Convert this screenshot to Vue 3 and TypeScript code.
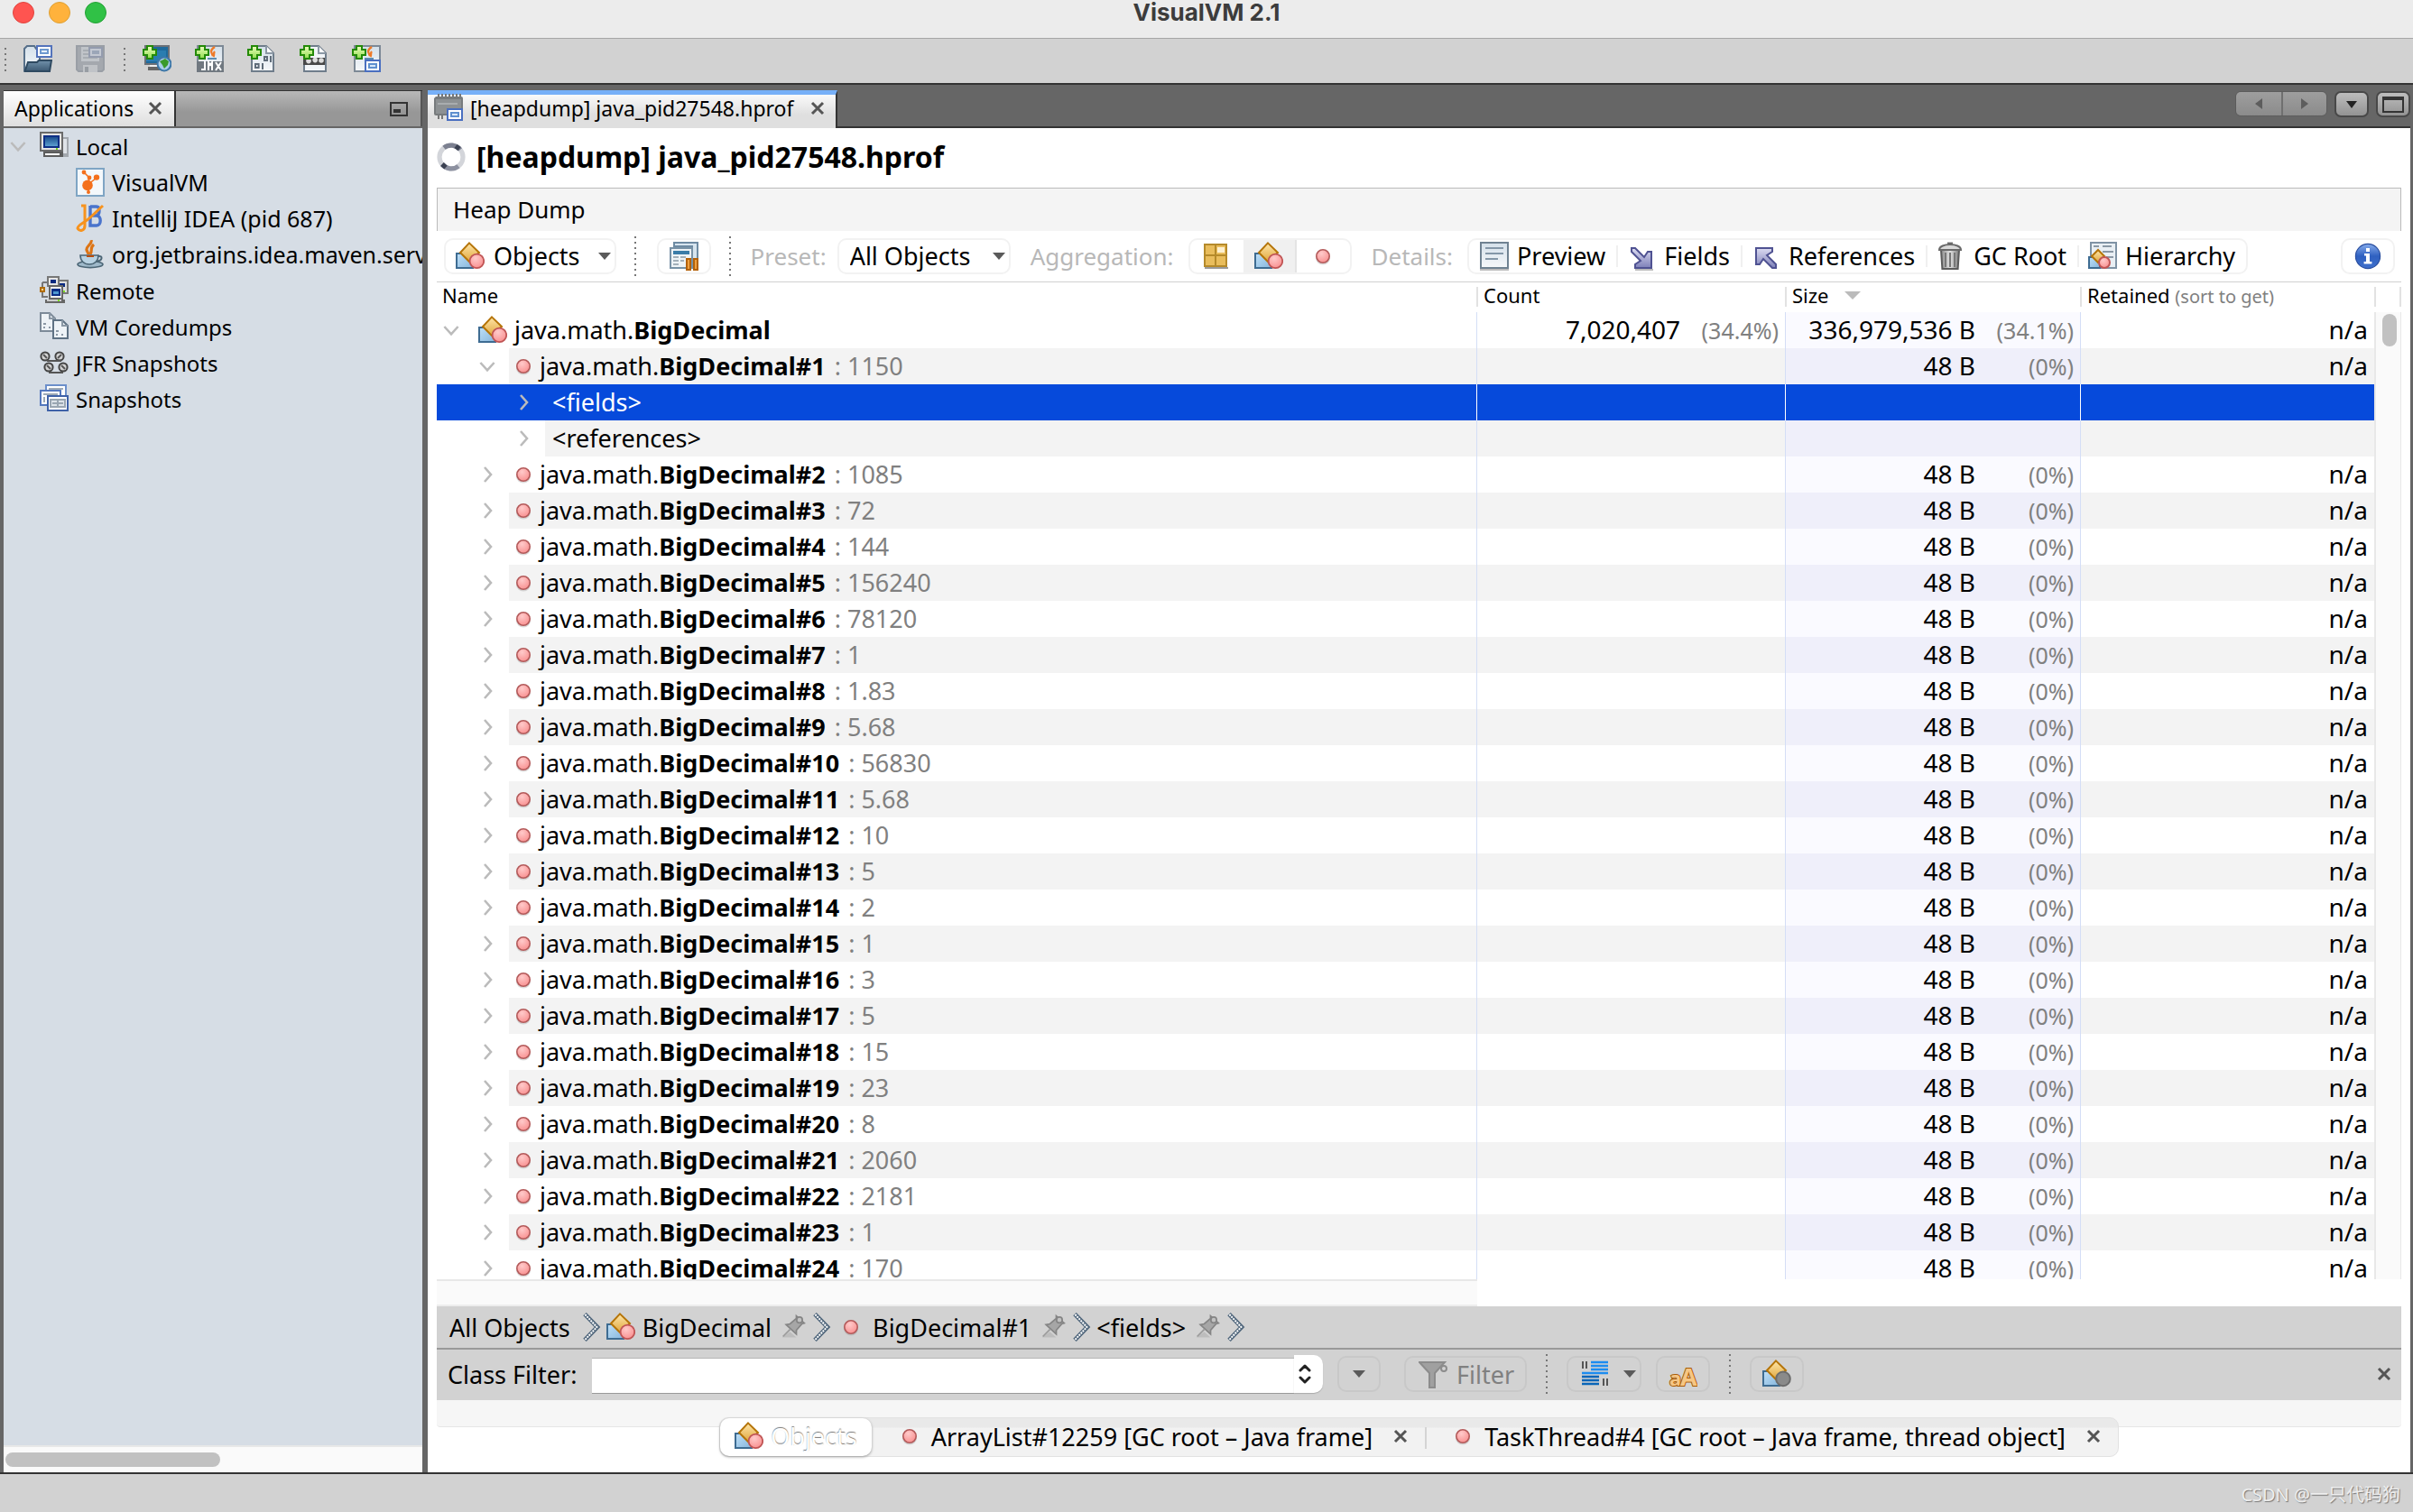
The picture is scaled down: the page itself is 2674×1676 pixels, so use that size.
<script setup lang="ts">
import { ref } from 'vue'

interface Row {
  level: number
  open: boolean
  icon?: string
  plain?: string
  bold?: string
  detail?: string
  count?: string
  countPct?: string
  size?: string
  sizePct?: string
  retained?: string
  selected?: boolean
}

const details = [
  '1085', '72', '144', '156240', '78120', '1', '1.83', '5.68', '56830', '5.68', '10', '5',
  '2', '1', '3', '5', '15', '23', '8', '2060', '2181', '1', '170',
]

const instance = (n: number, detail: string, open = false): Row => ({
  level: 1,
  open,
  icon: 'dot',
  plain: 'java.math.',
  bold: `BigDecimal#${n}`,
  detail,
  size: '48 B',
  sizePct: '(0%)',
  retained: 'n/a',
})

const rows: Row[] = [
  {
    level: 0, open: true, icon: 'classes', plain: 'java.math.', bold: 'BigDecimal',
    count: '7,020,407', countPct: '(34.4%)', size: '336,979,536 B', sizePct: '(34.1%)', retained: 'n/a',
  },
  instance(1, '1150', true),
  { level: 2, open: false, plain: '<fields>', selected: true },
  { level: 2, open: false, plain: '<references>' },
  ...details.map((d, i) => instance(i + 2, d)),
]

const toolbarIcons = [
  { id: 'add-remote', label: 'Add Remote Host' },
  { id: 'add-jmx', label: 'Add JMX Connection' },
  { id: 'add-core', label: 'Add VM Coredump' },
  { id: 'add-jfr', label: 'Add JFR Snapshot' },
  { id: 'add-snap', label: 'Load Snapshot' },
]

const tree = [
  { id: 'local', label: 'Local', open: true, child: false },
  { id: 'visualvm', label: 'VisualVM', open: false, child: true },
  { id: 'idea', label: 'IntelliJ IDEA (pid 687)', open: false, child: true },
  { id: 'java', label: 'org.jetbrains.idea.maven.serv', open: false, child: true },
  { id: 'remote', label: 'Remote', open: false, child: false },
  { id: 'coredumps', label: 'VM Coredumps', open: false, child: false },
  { id: 'jfr', label: 'JFR Snapshots', open: false, child: false },
  { id: 'snapshots', label: 'Snapshots', open: false, child: false },
]

const detailButtons = [
  { id: 'preview', label: 'Preview' },
  { id: 'fields', label: 'Fields' },
  { id: 'references', label: 'References' },
  { id: 'trash', label: 'GC Root' },
  { id: 'hierarchy', label: 'Hierarchy' },
]

const crumbs = [
  { icon: '', label: 'All Objects', pin: false },
  { icon: 'classes', label: 'BigDecimal', pin: true },
  { icon: 'dot', label: 'BigDecimal#1', pin: true },
  { icon: '', label: '<fields>', pin: true },
]

const preset = ref('All Objects')
const classFilter = ref('')
</script>

<template>
  <div class="window">
    <svg class="defs" width="0" height="0" aria-hidden="true">
      <defs>
        <linearGradient id="gGold" x1="0" y1="0" x2="0" y2="1"><stop offset="0" stop-color="#ffe6a8" /><stop offset="1" stop-color="#e0a840" /></linearGradient>
        <linearGradient id="gBlue" x1="0" y1="0" x2="1" y2="1"><stop offset="0" stop-color="#bfe0f8" /><stop offset="1" stop-color="#86b6dc" /></linearGradient>
        <radialGradient id="gPink" cx="0.4" cy="0.3" r="0.8"><stop offset="0" stop-color="#ffcaca" /><stop offset="1" stop-color="#f88a8a" /></radialGradient>
        <linearGradient id="gSheet" x1="0" y1="0" x2="0" y2="1"><stop offset="0" stop-color="#d4e0ea" /><stop offset="1" stop-color="#f6f8fa" /></linearGradient>
        <linearGradient id="gSteel" x1="0" y1="0" x2="0" y2="1"><stop offset="0" stop-color="#7191ab" /><stop offset="1" stop-color="#3c5972" /></linearGradient>
        <linearGradient id="gScreen" x1="0" y1="0" x2="0" y2="1"><stop offset="0" stop-color="#1c4f8e" /><stop offset="1" stop-color="#5c9fd0" /></linearGradient>
        <linearGradient id="gArrow" x1="0" y1="0" x2="0" y2="1"><stop offset="0" stop-color="#dcdcf2" /><stop offset="1" stop-color="#7d80b8" /></linearGradient>
        <linearGradient id="gMetal" x1="0" y1="0" x2="1" y2="0"><stop offset="0" stop-color="#8a8a8a" /><stop offset="0.5" stop-color="#e2e2e2" /><stop offset="1" stop-color="#7c7c7c" /></linearGradient>
        <linearGradient id="gInfo" x1="0" y1="0" x2="0" y2="1"><stop offset="0" stop-color="#86acec" /><stop offset="0.5" stop-color="#2f60c0" /><stop offset="1" stop-color="#3f70cc" /></linearGradient>
        <linearGradient id="gPlus" x1="0" y1="0" x2="0" y2="1"><stop offset="0" stop-color="#efffc0" /><stop offset="1" stop-color="#8fdc4e" /></linearGradient>
      </defs>

      <symbol id="plus" viewBox="0 0 16 16">
        <path d="M2.500 .5h3v2h2v3h-2v2h-3v-2h-2v-3h2z" fill="url(#gPlus)" stroke="#248a08" />
      </symbol>
      <symbol id="window-badge" viewBox="0 0 16 16">
        <rect x="7.500" y="8.500" width="8" height="6" fill="#fff" stroke="#4a6fc0" />
        <rect x="9.500" y="10.500" width="4" height="2" fill="#d8e8fa" stroke="#5f90cf" />
      </symbol>

      <symbol id="open" viewBox="0 0 16 16">
        <path d="M.5 14V2L2 .5h4l1 1.500h2V13z" fill="url(#gSheet)" stroke="#57708a" />
        <rect x="7.500" y=".5" width="8" height="6" fill="#fff" stroke="#5474bc" />
        <rect x="9.500" y="2.500" width="4" height="2" fill="#e4eefa" stroke="#6d98cf" />
        <path d="M2.500 9.500h5l1-1h7L14.500 14.500H.8z" fill="url(#gSteel)" stroke="#2f4a61" />
      </symbol>
      <symbol id="save" viewBox="0 0 16 16">
        <path d="M.5.5h15v13l-1 1h-13l-1-1z" fill="#a4a8ae" stroke="#9a9fa6" />
        <path d="M3 1h10v8H3z" fill="#c0c4c9" />
        <path d="M4 3h3M4 5h3M4 7h8" stroke="#a8adb3" />
        <rect x="7.500" y="1.500" width="7" height="5" fill="#c3c8d2" stroke="#949cae" />
        <rect x="9.500" y="3.500" width="3" height="1" fill="none" stroke="#9ba6b8" />
        <path d="M4 11h8v4H4z" fill="#c0c3c7" /><path d="M5 12h2v3H5z" fill="#989da3" />
      </symbol>
      <symbol id="add-remote" viewBox="0 0 16 16">
        <rect x="1.500" y=".5" width="13" height="10" fill="#1e6a9c" stroke="#6b7077" />
        <path d="M2 3h11v6H2z" fill="#2a7db0" />
        <path d="M3 12h8v2H3z" fill="#666" /><path d="M4 11h7v1H4z" fill="#eee" />
        <circle cx="12" cy="10.500" r="3.700" fill="#a9cdea" stroke="#3d77a8" />
        <path d="M9.500 9l3-1.500 2 1.500-.5 2-2 2-1-2z" fill="#3a9a2c" />
        <use href="#plus" />
      </symbol>
      <symbol id="add-jmx" viewBox="0 0 16 16">
        <rect x="1.500" y=".5" width="14" height="14" fill="url(#gSheet)" stroke="#7d8996" />
        <path d="M11 1c-3 2-2 3-1 5M11 3.500c-1 1 0 2-.8 3" fill="none" stroke="#ee7a28" stroke-width="1.200" />
        <path d="M7 7.500h5" stroke="#5d8db2" />
        <path d="M1 9h15v6H1z" fill="#707880" />
        <path d="M5.500 9v4.500h-2M7.500 14V9.500l1 1.500 1-1.500V14M11.500 9.500l3 4.500M14.500 9.500l-3 4.500" fill="none" stroke="#fff" />
        <use href="#plus" />
      </symbol>
      <symbol id="add-core" viewBox="0 0 16 16">
        <path d="M2.500.5h8l4 4v10h-12z" fill="url(#gSheet)" stroke="#6f7d8b" />
        <path d="M10.500.5v4h4" fill="#fff" stroke="#8b98a5" />
        <rect x="9.500" y="6.500" width="1.500" height="2" fill="none" stroke="#5f6c79" />
        <path d="M13 6v3.500M8.500 10v3.500" stroke="#5f6c79" />
        <rect x="4.500" y="10.500" width="1.800" height="2" fill="none" stroke="#5f6c79" />
        <use href="#plus" />
      </symbol>
      <symbol id="add-jfr" viewBox="0 0 16 16">
        <path d="M2.500.5h8l4 4v10h-12z" fill="#f2f5f8" stroke="#6f7d8b" />
        <path d="M10.500.5v4h4" fill="#fff" stroke="#8b98a5" />
        <path d="M2 7h12v4H2z" fill="#484848" />
        <circle cx="5" cy="8.800" r="1.400" fill="#ddd" /><circle cx="8.600" cy="8.300" r="1.400" fill="#ddd" /><circle cx="12" cy="8.500" r="1.400" fill="#ddd" />
        <use href="#plus" />
      </symbol>
      <symbol id="add-snap" viewBox="0 0 16 16">
        <rect x="1.500" y=".5" width="14" height="14" fill="url(#gSheet)" stroke="#7d8996" />
        <path d="M11 1c-3 2-2 3-1 5M11 3.500c-1 1 0 2-.8 3" fill="none" stroke="#ee7a28" stroke-width="1.200" />
        <path d="M7 7.500h5" stroke="#5d8db2" />
        <use href="#window-badge" />
        <use href="#plus" />
      </symbol>

      <symbol id="local" viewBox="0 0 16 16">
        <path d="M12 3h4v11h-4z" fill="#a3a8ae" /><path d="M13 4h2v8h-2z" fill="#dfe3e8" />
        <path d="M2 11h11v3H2z" fill="#5c5c5c" /><path d="M3 12h8v1H3z" fill="#fff" />
        <rect x=".5" y=".5" width="12" height="10" fill="#e4e4e4" stroke="#6a6a6a" />
        <path d="M2 2h9v7H2z" fill="#0e2f86" /><path d="M3 3h7v5H3z" fill="url(#gScreen)" />
        <path d="M9 9h1v1H9z" fill="#76d321" />
      </symbol>
      <symbol id="visualvm" viewBox="0 0 16 16">
        <rect x=".5" y=".5" width="15" height="15" fill="#f4f8fb" stroke="#7fa5c4" />
        <circle cx="6.500" cy="9.700" r="2.900" fill="#f4701c" /><circle cx="11.500" cy="5.300" r="1.600" fill="#f4701c" />
        <circle cx="4.500" cy="2.500" r="1.200" fill="#f4701c" /><circle cx="7.500" cy="5.500" r="1.200" fill="#f4701c" /><circle cx="7" cy="13.500" r="1" fill="#f4701c" />
        <path d="M4.500 2.500l3 3-1 4 5-4M6.500 9l.5 4" stroke="#f4701c" stroke-width=".8" fill="none" />
      </symbol>
      <symbol id="idea" viewBox="0 0 16 16">
        <path d="M8 1.500h3.500c2 0 2 4.500 0 5H8M8 6.500h3.500c2.800 0 2.800 5.500 0 5.500H8zM8 1v11" fill="none" stroke="#4a74cc" stroke-width="1.700" />
        <path d="M3 1h2v11c0 3-3 3.500-4 1.500 0-2 4-3 7-6l7-6.500" fill="none" stroke="#f7931e" stroke-width="1.500" />
      </symbol>
      <symbol id="java" viewBox="0 0 16 16">
        <path d="M8.500 0c1 2-3 3.500-2.500 5.500.3 1.200 1 1.500.8 2.500M10 2.500C7.500 4.500 9.500 5.500 8 8" fill="none" stroke="#dd7414" stroke-width="1.600" />
        <ellipse cx="8" cy="13.500" rx="7" ry="1.800" fill="#9fb9ca" stroke="#4c6676" stroke-width=".8" />
        <path d="M2.500 8.500h10c0 3-2 5-5 5s-5-2-5-5z" fill="#b9d2e2" stroke="#4c6676" stroke-width=".8" />
        <path d="M12.500 9c2.500-.5 2.500 2.500-.8 2.700" fill="none" stroke="#4c6676" />
        <path d="M6 9h4" stroke="#b84b0a" />
      </symbol>
      <symbol id="remote" viewBox="0 0 16 16">
        <path d="M1.500 3.500h4M1.500 3.500v8h3" fill="none" stroke="#777" />
        <rect x="10.500" y="2.500" width="5" height="7" fill="#ddd" stroke="#777" /><path d="M11 4h3v2h-3z" fill="#0a2a80" />
        <rect x="4.500" y=".5" width="6" height="5" fill="#e6e6e6" stroke="#777" /><path d="M6 2h3v2H6z" fill="#0a2a80" />
        <rect x="5.500" y="5.500" width="7" height="7" fill="#f0f0f0" stroke="#666" /><path d="M6.500 7h5v4h-5z" fill="#0a2f86" /><path d="M7.500 8.500h3v1.500h-3z" fill="#4d97d0" />
        <path d="M3 13h11v2H3z" fill="#666" /><path d="M4 13h8v1H4z" fill="#ccc" />
        <path d="M10 13h1v1h-1zM13 8h1v1h-1z" fill="#7be01e" />
        <rect x=".5" y="6.500" width="2" height="2" fill="#ffd890" stroke="#b06c0c" />
      </symbol>
      <symbol id="coredumps" viewBox="0 0 16 16">
        <path d="M.5.5h5l3 3v7h-8z" fill="#eef3f7" stroke="#7c8a98" /><path d="M5.500.5v3h3M2 6.500h1.500M2 8.500h1M5 8.500h1" fill="none" stroke="#8b98a5" />
        <path d="M7.500 4.500h5l3 3v7h-8z" fill="#eef3f7" stroke="#5f7284" /><path d="M12.500 4.500v3h3M9 10.500h1.500M9 12.500h1M12 12.500h1" fill="none" stroke="#8b98a5" />
      </symbol>
      <symbol id="jfr" viewBox="0 0 16 16">
        <g fill="#d3d3d3" stroke="#444"><circle cx="3" cy="4.500" r="2.300" /><circle cx="11" cy="4.500" r="2.300" /><circle cx="5" cy="10.500" r="2.300" /><circle cx="13" cy="10.500" r="2.300" /></g>
        <path d="M4 7h8M5 13.500h8M2 3.500l2 2M10 5.500l2-2M4 9.500l2 2M12 9.500l2 2" stroke="#555" />
      </symbol>
      <symbol id="snapshots" viewBox="0 0 16 16">
        <rect x="3.500" y=".5" width="11" height="6" fill="#fff" stroke="#6c8fca" /><path d="M5 2.500h8" stroke="#9eaab6" />
        <rect x=".5" y="3.500" width="11" height="8" fill="#fff" stroke="#5478be" /><path d="M2 5.500h8M2.500 7v3" stroke="#9eaab6" />
        <rect x="4.500" y="6.500" width="11" height="8" fill="#fff" stroke="#3f62a8" />
        <path d="M6 8.500h8v4H6zM7 10.500h6M10 8.500v4" fill="#dde3e9" stroke="#9aa6b2" />
      </symbol>

      <symbol id="heap" viewBox="0 0 16 16">
        <path d="M2 0h1v2H2zM4 0h1v2H4zM6 0h1v2H6zM8 0h1v2H8zM10 0h1v2h-1zM12 0h1v2h-1zM14 0h1v2h-1zM2 12h1v2H2zM4 12h1v2H4z" fill="#777" />
        <path d="M1 1.500h14a1 1 0 0 1 1 1V12H1a1 1 0 0 1-1-1V2.500z" fill="#777b7d" /><path d="M1 3h14v8H1z" fill="#8d9193" /><path d="M2 5h11v1H2z" fill="#a9adaf" />
        <use href="#window-badge" />
      </symbol>
      <symbol id="classes" viewBox="0 0 16 16">
        <path d="M.5 6.500h9v8h-9z" fill="url(#gBlue)" stroke="#3e6c92" />
        <path d="M7.500.7L13 6 7.500 11 2.500 6z" fill="url(#gGold)" stroke="#b57408" />
        <circle cx="11.700" cy="10.700" r="3.900" fill="url(#gPink)" stroke="#c05555" stroke-width=".9" />
      </symbol>
      <symbol id="classes-gray" viewBox="0 0 16 16">
        <path d="M.5 6.500h9v8h-9z" fill="url(#gBlue)" stroke="#3e6c92" />
        <path d="M7.500.7L13 6 7.500 11 2.500 6z" fill="url(#gGold)" stroke="#b57408" />
        <circle cx="11.500" cy="10.700" r="3.900" fill="#8a8a8a" stroke="#6c6c6c" />
      </symbol>
      <symbol id="dot" viewBox="0 0 16 16">
        <ellipse cx="8" cy="9" rx="4" ry="3.800" fill="#999" opacity=".35" />
        <circle cx="8" cy="8" r="3.600" fill="url(#gPink)" stroke="#b35a5a" stroke-width=".8" />
      </symbol>
      <symbol id="package" viewBox="0 0 16 16">
        <path d="M1 1h13v13H1z" fill="#e9bd5c" /><path d="M1.500 1.500h12v12h-12zM7.500 1v13M1 7.500h13" fill="none" stroke="#b58a2a" />
        <path d="M1.500 14.500h13" stroke="#9a9a9a" /><path d="M8.500 3h4v3h-4z" fill="#fdf0d0" />
      </symbol>
      <symbol id="auto" viewBox="0 0 16 16">
        <path d="M2.500.5h13v10h-3v-8h-10z" fill="#d7e5ef" stroke="#6e8ba3" />
        <path d="M.5 3.500h12v11H.5z" fill="#eef3f6" stroke="#7892a6" /><path d="M2 5h9v2H2z" fill="#3a7ca8" />
        <path d="M2 8.500h3M6 8.500h3M2 10.500h3M6 10.500h2M2 12.500h3" stroke="#a3b0ba" />
        <path d="M9.500 9.500h2v6h-2zM13.500 9.500h2v6h-2z" fill="#f0a040" stroke="#b4620a" />
      </symbol>
      <symbol id="preview" viewBox="0 0 16 16">
        <path d="M0 15h16v1H0z" fill="#bbb" /><path d="M.5.5h15v14H.5z" fill="url(#gSheet)" stroke="#6f8292" />
        <path d="M3 3.500h10M3 6.500h10M3 9.500h7" stroke="#8497a8" />
      </symbol>
      <symbol id="fields" viewBox="0 0 16 16">
        <path d="M4.500 15.500h10" stroke="#bbb" />
        <path d="M4.500 3.500h-2v2l5 5-3 2v2h9v-9h-2l-2 3z" fill="url(#gArrow)" stroke="#4f5292" />
      </symbol>
      <symbol id="references" viewBox="0 0 16 16">
        <path d="M11.500 14.500h2v-2l-5-5 3-2v-2h-9v9h2l2-3z" fill="url(#gArrow)" stroke="#4f5292" />
      </symbol>
      <symbol id="trash" viewBox="0 0 16 16">
        <path d="M2.500 4.500h10l-.7 10.500H3.200z" fill="url(#gMetal)" stroke="#5c5c5c" /><path d="M5 6v8M7.500 6v8M10 6v8" stroke="#777" />
        <path d="M1.500 4.500c0-4 12-4 12 0z" fill="#d9d9d9" stroke="#6a6a6a" /><path d="M6 .8h3" stroke="#666" />
      </symbol>
      <symbol id="hierarchy" viewBox="0 0 16 16">
        <path d="M1.500.5h14v14h-14z" fill="#e9eff4" stroke="#7f93a5" /><path d="M3 2.500h3M8 2.500h5M8 5.500h6M10 8.500h4" stroke="#8a98a5" />
        <path d="M.5 8.500h6v6h-6z" fill="url(#gBlue)" stroke="#3e6c92" /><path d="M5.500 4.500L9 8l-3.500 3.500L2 8z" fill="url(#gGold)" stroke="#b57408" />
        <circle cx="9" cy="11.500" r="3" fill="url(#gPink)" stroke="#c05555" />
      </symbol>
      <symbol id="info" viewBox="0 0 16 16">
        <circle cx="8" cy="8" r="6.800" fill="url(#gInfo)" stroke="#2a4fa0" stroke-width=".6" />
        <path d="M7 3.500h2v2H7zM6 6.500h3v4.500h1.200v1.200H5.800V11H7V7.700H6z" fill="#fff" />
      </symbol>
      <symbol id="funnel" viewBox="0 0 16 16">
        <path d="M.5 1.500h14L9 7.500v8H6v-8z" fill="#a0a0a0" stroke="#8c8c8c" /><circle cx="14" cy="5" r="1.500" fill="none" stroke="#8c8c8c" />
      </symbol>
      <symbol id="lines" viewBox="0 0 16 16">
        <path d="M6 1.500h9.500M6 3.500h9.500M6 5.500h9.500M1 7.500h14.500" stroke="#1c8cf0" stroke-width="1.200" /><path d="M1 9.500h9.500M1 11.500h9.500M1 13.500h9.500" stroke="#0a66b8" stroke-width="1.200" />
        <path d="M1.500 1v4M3.500 1v4M13 10.500v4M15 10.500v4" stroke="#555" />
      </symbol>
      <symbol id="pin" viewBox="0 0 16 16">
        <path d="M1 14.500h9L6 11z" fill="#bdbdbd" /><path d="M1.500 14L6 9.500" stroke="#9a9a9a" />
        <path d="M3.500 6.500l2.500-.5 4-3.500V1l5 4.500-1.500.5L10 10v2.500z" fill="#a6a6a6" stroke="#858585" />
        <circle cx="12" cy="3.500" r="1.800" fill="#c2c2c2" stroke="#858585" />
      </symbol>
      <symbol id="crumb-sep" viewBox="0 0 10 16">
        <path d="M1 .8l7 7.200-7 7.200" fill="none" stroke="#51677c" stroke-width="2.400" />
        <path d="M1.200 1l6.500 7-6.500 7" fill="none" stroke="#fff" stroke-width="1" stroke-dasharray="1 .5" />
      </symbol>
      <symbol id="chev-right" viewBox="0 0 16 16"><path d="M6.500 4l3.500 4-3.500 4" fill="none" stroke="#bbb" stroke-width="1.300" /></symbol>
      <symbol id="chev-down" viewBox="0 0 16 16"><path d="M4.200 6l3.800 4.200L11.800 6" fill="none" stroke="#bbb" stroke-width="1.300" /></symbol>
      <symbol id="close" viewBox="0 0 16 16"><path d="M2 2l12 12M14 2L2 14" fill="none" stroke="#555" stroke-width="3" /></symbol>
      <symbol id="tri" viewBox="0 0 14 8"><path d="M0 0h14L7 8z" fill="#5a5a5a" /></symbol>
    </svg>

    <header class="titlebar">
      <div class="lights"><span class="light red"></span><span class="light amber"></span><span class="light green"></span></div>
      <h1 class="title">VisualVM 2.1</h1>
      <div class="lights"></div>
    </header>

    <div class="main-toolbar">
      <span class="dots short"></span>
      <button class="tool" aria-label="Open"><svg class="icon"><use href="#open" /></svg></button>
      <button class="tool" aria-label="Save" disabled><svg class="icon"><use href="#save" /></svg></button>
      <span class="dots short second"></span>
      <button v-for="t in toolbarIcons" :key="t.id" class="tool" :aria-label="t.label">
        <svg class="icon"><use :href="`#${t.id}`" /></svg>
      </button>
    </div>

    <div class="workspace">
      <aside class="side">
        <div class="side-tabs">
          <div class="side-tab">
            Applications
            <button class="close" aria-label="Close Applications"><svg class="x"><use href="#close" /></svg></button>
          </div>
          <div class="side-rest">
            <button class="close" aria-label="Minimize"><span class="mini"></span></button>
          </div>
        </div>
        <ul class="tree">
          <li v-for="n in tree" :key="n.id" class="node" :class="{ child: n.child }">
            <span class="twist"><svg v-if="n.open" class="icon"><use href="#chev-down" /></svg></span>
            <svg class="icon"><use :href="`#${n.id}`" /></svg>
            <span class="node-label">{{ n.label }}</span>
          </li>
        </ul>
        <div class="hscroll"><span class="hthumb"></span></div>
      </aside>

      <main class="editor">
        <div class="doc-tabs">
          <div class="doc-tab">
            <svg class="icon"><use href="#heap" /></svg>
            <span>[heapdump] java_pid27548.hprof</span>
            <button class="close" aria-label="Close document"><svg class="x"><use href="#close" /></svg></button>
          </div>
          <div class="doc-fill">
            <div class="nav-pair">
              <button class="nav" aria-label="Previous" disabled><span class="arrow left"></span></button>
              <button class="nav" aria-label="Next" disabled><span class="arrow right"></span></button>
            </div>
            <button class="nav solo" aria-label="Show documents"><span class="arrow down"></span></button>
            <button class="nav solo" aria-label="Maximize"><span class="max"></span></button>
          </div>
        </div>

        <div class="doc">
          <div class="heading">
            <svg class="icon" viewBox="0 0 16 16">
              <circle cx="8" cy="8" r="6.500" fill="none" stroke="#d3d5da" stroke-width="2.600" />
              <path d="M4 2.900a6.500 6.500 0 0 1 9 1" fill="none" stroke="#7c8090" stroke-width="2.600" />
              <path d="M10.500 2l2 1.500" fill="none" stroke="#3b4152" stroke-width="2.600" />
              <path d="M12 13.100a6.500 6.500 0 0 1-9-1" fill="none" stroke="#8d91a0" stroke-width="2.600" />
              <path d="M5 13.800l-2-1.800" fill="none" stroke="#3b4152" stroke-width="2.600" />
            </svg>
            <h2>[heapdump] java_pid27548.hprof</h2>
          </div>
          <div class="section">Heap Dump</div>

          <div class="view-bar">
            <button class="pill objects"><svg class="icon"><use href="#classes" /></svg>Objects<svg class="tri"><use href="#tri" /></svg></button>
            <span class="dots"></span>
            <button class="pill only" aria-label="Auto refresh"><svg class="icon"><use href="#auto" /></svg></button>
            <span class="dots"></span>
            <label class="faint" for="preset">Preset:</label>
            <span class="pill pick">
              <select id="preset" v-model="preset"><option>All Objects</option></select>
              <svg class="tri"><use href="#tri" /></svg>
            </span>
            <span class="faint">Aggregation:</span>
            <div class="group">
              <button class="seg" aria-label="Packages"><svg class="icon"><use href="#package" /></svg></button>
              <button class="seg on" aria-label="Classes"><svg class="icon"><use href="#classes" /></svg></button>
              <button class="seg" aria-label="Instances"><svg class="icon"><use href="#dot" /></svg></button>
            </div>
            <span class="faint">Details:</span>
            <div class="group">
              <button v-for="d in detailButtons" :key="d.id" class="seg text"><svg class="icon"><use :href="`#${d.id}`" /></svg>{{ d.label }}</button>
            </div>
            <button class="pill only info" aria-label="Information"><svg class="icon"><use href="#info" /></svg></button>
          </div>

          <div class="grid">
            <div class="grid-clip">
              <table>
                <colgroup><col /><col class="c-count" /><col class="c-size" /><col class="c-ret" /></colgroup>
                <thead>
                  <tr>
                    <th scope="col">Name</th>
                    <th scope="col">Count</th>
                    <th scope="col">Size <span class="sort"></span></th>
                    <th scope="col">Retained <small>(sort to get)</small></th>
                  </tr>
                </thead>
                <tbody>
                  <tr v-for="(r, i) in rows" :key="i" :class="{ alt: i % 2 === 1, selected: r.selected }">
                    <td class="name">
                      <div class="cell" :class="`l${r.level}`">
                        <span class="indent"><svg class="icon"><use :href="r.open ? '#chev-down' : '#chev-right'" /></svg></span>
                        <span class="body">
                          <svg v-if="r.icon" class="icon" :class="{ small: r.icon === 'dot' }"><use :href="`#${r.icon}`" /></svg>
                          <span>{{ r.plain }}<b v-if="r.bold">{{ r.bold }}</b></span>
                          <span v-if="r.detail" class="muted">: {{ r.detail }}</span>
                        </span>
                      </div>
                    </td>
                    <td><div v-if="r.count" class="num">{{ r.count }}<span class="pct">{{ r.countPct }}</span></div></td>
                    <td class="size"><div v-if="r.size" class="num">{{ r.size }}<span class="pct">{{ r.sizePct }}</span></div></td>
                    <td><div class="num">{{ r.retained }}</div></td>
                  </tr>
                </tbody>
              </table>
            </div>
            <div class="vscroll"><span class="vhead"></span><div class="vtrack"><span class="vthumb"></span></div></div>
          </div>
          <div class="name-scroll"><span class="name-track"></span></div>

          <nav class="crumbs" aria-label="Path">
            <template v-for="c in crumbs" :key="c.label">
              <svg v-if="c.icon" class="icon"><use :href="`#${c.icon}`" /></svg>
              <a href="#">{{ c.label }}</a>
              <svg v-if="c.pin" class="icon pin"><use href="#pin" /></svg>
              <svg class="sep"><use href="#crumb-sep" /></svg>
            </template>
          </nav>

          <div class="filter-bar">
            <label for="filter">Class Filter:</label>
            <div class="combo">
              <input id="filter" v-model="classFilter" type="text" />
              <button class="stepper" aria-label="Show history">
                <svg width="14" height="22" viewBox="0 0 14 22"><path d="M2 7l5-5 5 5M2 15l5 5 5-5" fill="none" stroke="#222" stroke-width="3" stroke-linecap="round" stroke-linejoin="round" /></svg>
              </button>
            </div>
            <button class="pill gray slim" aria-label="Filter type"><svg class="tri"><use href="#tri" /></svg></button>
            <button class="pill gray filter" disabled><svg class="icon"><use href="#funnel" /></svg>Filter</button>
            <span class="dots"></span>
            <button class="pill gray mode" aria-label="Match mode"><svg class="icon"><use href="#lines" /></svg><svg class="tri"><use href="#tri" /></svg></button>
            <button class="pill gray only" aria-label="Match case">
              <svg class="icon letters" viewBox="0 0 32 32"><text x="1" y="29" font-size="22">a</text><text x="13" y="29" font-size="27">A</text></svg>
            </button>
            <span class="dots"></span>
            <button class="pill gray only" aria-label="Filter classes"><svg class="icon"><use href="#classes-gray" /></svg></button>
            <button class="close end" aria-label="Close filter"><svg class="x"><use href="#close" /></svg></button>
          </div>

          <div class="strip"></div>
          <div class="view-tabs">
            <div class="view-set">
              <button class="view current"><svg class="icon"><use href="#classes" /></svg>Objects</button>
              <div class="view"><svg class="icon"><use href="#dot" /></svg>ArrayList#12259 [GC root – Java frame]<button class="close" aria-label="Close ArrayList#12259"><svg class="x"><use href="#close" /></svg></button></div>
              <div class="view"><svg class="icon"><use href="#dot" /></svg>TaskThread#4 [GC root – Java frame, thread object]<button class="close" aria-label="Close TaskThread#4"><svg class="x"><use href="#close" /></svg></button></div>
            </div>
          </div>
        </div>
      </main>
    </div>

    <footer class="status">CSDN @一只代码狗</footer>
  </div>
</template>

<style>
body {
  margin: 0;
}
</style>

<style scoped>
.window {
  display: flex;
  flex-direction: column;
  height: 100vh;
  overflow: hidden;
  background: #d2d2d2;
  color: #000;
  font-family: "Noto Sans", "Open Sans", sans-serif;
  font-size: 27px;
  white-space: nowrap;
}
.window *,
.window *::before {
  box-sizing: border-box;
}
.defs {
  position: absolute;
}
button,
input,
select {
  margin: 0;
  padding: 0;
  border: 0;
  background: none;
  color: inherit;
  font: inherit;
}
.icon {
  flex: none;
  width: 32px;
  height: 32px;
}
.x {
  width: 16px;
  height: 16px;
}
.tri {
  flex: none;
  width: 14px;
  height: 8px;
}
.close {
  display: flex;
  align-items: center;
}

/* Title bar */
.titlebar {
  display: flex;
  flex: none;
  height: 43px;
  border-bottom: 1px solid #a6a6a6;
  background: #ececec;
}
.lights {
  display: flex;
  flex: 1;
  gap: 16px;
  padding: 2px 0 0 14px;
}
.light {
  width: 24px;
  height: 24px;
  border: 1px solid;
  border-radius: 50%;
}
.red {
  border-color: #e0443e;
  background: #ff5450;
}
.amber {
  border-color: #dea034;
  background: #ffb23c;
}
.green {
  border-color: #24a135;
  background: #30c146;
}
.title {
  margin: 0;
  color: #3c3c3c;
  font: 700 26px/28px Inter, sans-serif;
}

/* Main toolbar */
.main-toolbar {
  display: flex;
  flex: none;
  align-items: center;
  height: 51px;
  padding: 0 0 4px 5px;
  border-bottom: 2px solid #333;
}
.tool {
  display: flex;
  justify-content: center;
  width: 58px;
}
.dots {
  flex: none;
  width: 2px;
  height: 44px;
  background: repeating-linear-gradient(#777 0 2px, transparent 2px 6px);
}
.dots.short {
  height: 26px;
  margin-right: 6px;
}
.dots.second {
  margin-left: 8px;
}

/* Workspace */
.workspace {
  display: flex;
  flex: 1;
  min-height: 0;
  padding: 6px 3px 0 4px;
  gap: 6px;
  border-bottom: 2px solid #333;
  background: #666;
}
.side {
  display: flex;
  flex: none;
  flex-direction: column;
  width: 464px;
  background: #d6dde5;
}
.side-tabs {
  display: flex;
  flex: none;
  height: 42px;
  border-top: 1px solid #333;
  border-bottom: 2px solid #666;
  font-size: 23px;
}
.side-tab {
  display: flex;
  align-items: center;
  gap: 16px;
  padding: 0 13px 2px 12px;
  border-right: 2px solid #333;
  background: linear-gradient(#fff, #dedede);
}
.side-rest {
  display: flex;
  flex: 1;
  align-items: center;
  justify-content: flex-end;
  padding-right: 14px;
  border-right: 2px solid #555;
  background: linear-gradient(#b8b8b8, #979797 60%);
}
.mini {
  display: block;
  width: 20px;
  height: 16px;
  border: 2px solid #333;
  background: linear-gradient(#333, #333) 2px 6px / 8px 4px no-repeat;
}
.tree {
  flex: 1;
  margin: 0;
  padding: 0;
  overflow: hidden;
  list-style: none;
  font-size: 24px;
}
.node {
  display: flex;
  align-items: center;
  height: 40px;
  gap: 8px;
}
.node.child {
  font-size: 25px;
}
.twist {
  display: flex;
  flex: none;
  width: 32px;
}
.node.child .twist {
  width: 72px;
}
.hscroll {
  flex: none;
  height: 30px;
  padding: 6px 2px;
  border-top: 2px solid #e8e8e8;
  background: #fafafa;
}
.hthumb {
  display: block;
  width: 238px;
  height: 16px;
  border-radius: 8px;
  background: #c1c1c1;
}

/* Editor tabs */
.editor {
  display: flex;
  flex: 1;
  flex-direction: column;
  min-width: 0;
}
.doc-tabs {
  display: flex;
  flex: none;
  height: 42px;
}
.doc-tab {
  display: flex;
  align-items: center;
  gap: 8px;
  padding: 0 12px 7px 7px;
  border-top: 5px solid #77b0f8;
  border-right: 2px solid #333;
  background: linear-gradient(#fafafa, #dfdfdf 60%);
  font-size: 23px;
}
.doc-tab .close {
  margin-left: 11px;
}
.doc-fill {
  display: flex;
  flex: 1;
  justify-content: flex-end;
  gap: 8px;
  padding: 1px 0 0;
  border-bottom: 2px solid #333;
}
.nav-pair {
  display: flex;
  height: 28px;
  border: 1px solid #5c5c5c;
  border-radius: 6px;
  overflow: hidden;
}
.nav {
  display: flex;
  align-items: center;
  justify-content: center;
  width: 50px;
  background: linear-gradient(#9e9e9e, #8b8b8b);
}
.nav + .nav {
  border-left: 2px solid #6f6f6f;
}
.nav.solo {
  width: 38px;
  height: 29px;
  border: 2px solid #484848;
  border-radius: 7px;
  background: linear-gradient(#bdbdbd, #939393);
}
.arrow {
  border: 6px solid transparent;
}
.arrow.left {
  border-width: 6px 8px 6px 0;
  border-right-color: #5d5d5d;
}
.arrow.right {
  border-width: 6px 0 6px 8px;
  border-left-color: #5d5d5d;
}
.arrow.down {
  border-width: 8px 6px 0;
  border-top-color: #222;
}
.max {
  width: 24px;
  height: 18px;
  border: 2px solid #333;
  border-top-width: 4px;
}

/* Document */
.doc {
  display: flex;
  flex: 1;
  flex-direction: column;
  min-height: 0;
  padding: 0 10px;
  background: #fff;
}
.heading {
  display: flex;
  flex: none;
  align-items: center;
  gap: 12px;
  height: 66px;
  padding-bottom: 2px;
}
h2 {
  margin: 0;
  font-size: 32px;
  font-weight: 700;
  line-height: 60px;
}
.section {
  flex: none;
  height: 48px;
  padding-left: 17px;
  border: 1px solid #bbb;
  border-bottom: 0;
  background: #f4f4f4;
  font-size: 26px;
  line-height: 46px;
}
.view-bar {
  display: flex;
  flex: none;
  align-items: center;
  height: 57px;
  padding: 0 7px 1px 8px;
  border-bottom: 1px solid #d0d0d0;
}
.pill,
.group {
  display: flex;
  flex: none;
  align-items: center;
  height: 40px;
  border: 2px solid #f2f2f2;
  border-radius: 10px;
}
.objects {
  gap: 10px;
  margin-right: 20px;
  padding: 0 4px 0 11px;
}
.objects .tri {
  margin-left: 10px;
}
.only {
  justify-content: center;
  width: 60px;
}
.view-bar .only {
  margin: 0 20px 0 23px;
}
.view-bar .info {
  margin: 0 0 0 auto;
}
.faint {
  margin: 0 12px 0 22px;
  color: #b8b8b8;
  font-size: 26px;
}
.faint + .group {
  margin-left: 4px;
}
.pick {
  padding: 0 4px 0 12px;
}
select {
  width: 158px;
  appearance: none;
}
.seg {
  display: flex;
  align-items: center;
  justify-content: center;
  width: 59px;
  height: 36px;
}
.seg.on {
  border-right: 2px solid #e4e4e4;
  background: #f0f0f0;
}
.seg.text {
  position: relative;
  gap: 9px;
  width: auto;
  padding: 0 12px;
}
.seg.text + .seg.text::before {
  position: absolute;
  left: 0;
  width: 2px;
  height: 24px;
  background: #f0f0f0;
  content: "";
}

/* Object table */
.grid {
  display: flex;
  flex: 1;
  min-height: 0;
}
.grid-clip {
  flex: 1;
  min-width: 0;
  overflow: hidden;
}
table {
  width: 100%;
  border-spacing: 0;
  table-layout: fixed;
}
.c-count {
  width: 342px;
}
.c-size {
  width: 327px;
}
.c-ret {
  width: 326px;
}
th {
  height: 33px;
  padding: 0 0 5px 8px;
  background: linear-gradient(#e2e2e2, #e2e2e2) 0 5px / 2px 22px no-repeat;
  font-size: 22px;
  font-weight: 400;
  line-height: 28px;
  text-align: left;
}
th:first-child {
  padding-left: 6px;
  background: none;
}
small {
  color: #808080;
  font-size: 20px;
  line-height: 20px;
}
.sort {
  display: inline-block;
  margin: 0 0 4px 12px;
  border: 9px solid transparent;
  border-top-color: #bbb;
  border-bottom: 0;
}
td {
  height: 40px;
  padding: 0;
  border-left: 1px solid #d4def6;
}
td.name {
  border-left: 0;
}
.num {
  display: flex;
  align-items: baseline;
  justify-content: flex-end;
  height: 40px;
  padding-right: 7px;
  font-size: 28px;
  line-height: 38px;
}
.size {
  background: #fafaff;
}
.alt td:not(.name),
.alt .body {
  background: #f3f3f3;
}
.alt td.size {
  background: #efeffa;
}
.selected td {
  border-color: #fff;
  background: #064adb;
}
.selected .body {
  color: #fff;
}
.pct {
  width: 109px;
  color: #808080;
  font-size: 25px;
  text-align: right;
}
.cell,
.body {
  display: flex;
  align-items: center;
  height: 40px;
}
.body {
  flex: 1;
  gap: 10px;
  padding-left: 8px;
  line-height: 38px;
}
.indent {
  display: flex;
  flex: none;
  width: 40px;
}
.l0 .body {
  gap: 8px;
  padding-left: 6px;
}
.l1 .indent {
  width: 80px;
  padding-left: 40px;
}
.l2 .indent {
  width: 120px;
  padding-left: 80px;
}
.small {
  margin: 0 -8px;
}
.muted {
  color: #808080;
}
.vscroll {
  display: flex;
  flex: none;
  flex-direction: column;
  width: 30px;
}
.vhead {
  height: 22px;
  margin: 5px 0 6px;
  border-right: 2px solid #e2e2e2;
  border-left: 2px solid #e2e2e2;
}
.vtrack {
  flex: 1;
  padding: 2px 4px 0 7px;
  border-right: 1px solid #e8e8e8;
  border-left: 2px solid #e8e8e8;
  background: #fafafa;
}
.vthumb {
  display: block;
  width: 16px;
  height: 36px;
  border-radius: 8px;
  background: #c1c1c1;
}
.name-scroll {
  flex: none;
  height: 30px;
  padding-right: 1024px;
}
.name-track {
  display: block;
  height: 30px;
  border-top: 2px solid #e8e8e8;
  border-bottom: 2px solid #ededed;
  background: #fafafa;
}

/* Breadcrumbs */
.crumbs {
  display: flex;
  flex: none;
  align-items: center;
  height: 48px;
  padding-left: 14px;
  border-bottom: 2px solid #999;
  background: #d2d2d2;
}
a {
  color: inherit;
  text-decoration: none;
}
.crumbs .icon {
  margin-right: 8px;
}
.crumbs .pin {
  width: 28px;
  margin: 0 8px 0 10px;
}
.sep {
  width: 20px;
  height: 32px;
  margin-right: 6px;
}
a + .sep {
  margin-left: 14px;
}

/* Class filter */
.filter-bar {
  display: flex;
  flex: none;
  align-items: center;
  height: 56px;
  padding: 0 11px 2px 12px;
  background: #d2d2d2;
}
.filter-bar label {
  width: 160px;
}
.combo {
  display: flex;
  width: 810px;
  margin-right: 16px;
}
input {
  flex: 1;
  height: 40px;
  margin-top: 3px;
  border-top: 1px solid #b5b5b5;
  border-bottom: 1px solid #999;
  background: #fff;
}
.stepper {
  display: flex;
  align-items: center;
  width: 32px;
  height: 42px;
  padding-left: 5px;
  border-radius: 0 10px 10px 0;
  background: #fff;
  box-shadow: 0 1px 1px #aaa;
}
.gray {
  border-color: #c8c8c8;
}
.slim {
  justify-content: center;
  width: 48px;
  margin-right: 26px;
}
.filter {
  gap: 10px;
  padding: 0 12px 0 14px;
  color: #808080;
}
.mode {
  gap: 16px;
  margin-right: 16px;
  padding: 0 4px 0 13px;
}
.filter-bar .dots {
  margin: 0 21px;
}
.letters {
  fill: #f6c684;
  stroke: #a85c08;
  stroke-width: 2px;
  font-weight: 700;
  paint-order: stroke;
}
.end {
  margin-left: auto;
}

/* View tabs */
.strip {
  flex: none;
  height: 30px;
  border-bottom: 1px solid #e6e6e6;
  border-radius: 0 0 4px 4px;
  background: #f6f6f6;
}
.view-tabs {
  display: flex;
  flex: none;
  justify-content: center;
  height: 50px;
}
.view-set {
  display: flex;
  height: 44px;
  margin-top: -11px;
  border: 1px solid #e2e2e2;
  border-radius: 10px;
  background: linear-gradient(#e9e9e9 10px, #f2f2f2 11px);
}
.view {
  display: flex;
  align-items: center;
  gap: 8px;
  padding: 0 19px 2px 26px;
}
.view .close {
  margin-left: 15px;
}
.view + .view + .view {
  background: linear-gradient(#d4d4d4, #d4d4d4) 0 10px / 2px 24px no-repeat;
}
.view.current {
  padding: 0 16px 2px;
  border-radius: 10px;
  background: #fff;
  box-shadow: 0 1px 3px #999;
  color: #fff;
  text-shadow: 0 -1px 1px #777;
}

/* Status bar */
.status {
  flex: none;
  height: 42px;
  padding-right: 14px;
  color: #eee;
  font: 20px/46px "Noto Sans", "Noto Sans CJK SC", sans-serif;
  text-align: right;
  text-shadow: 1px 1px 1px #777;
}
</style>
